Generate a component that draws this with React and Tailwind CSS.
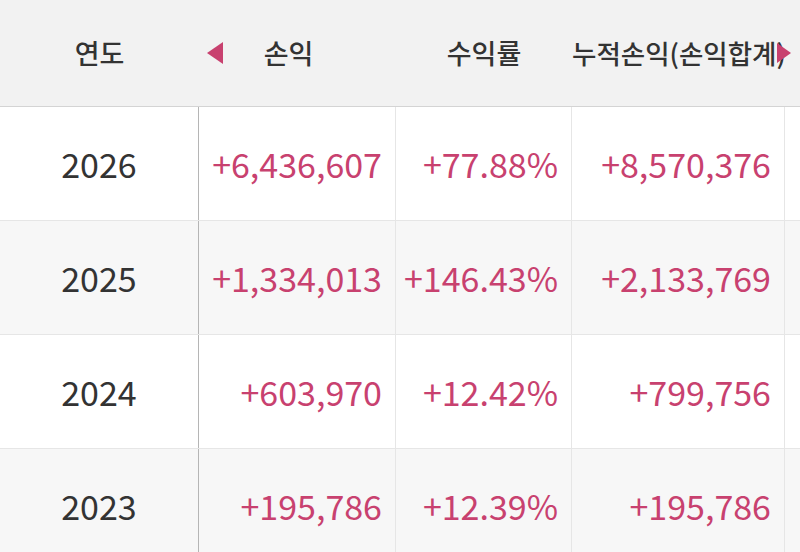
import React from 'react'

const rows = [
  { year: '2026', pnl: '+6,436,607', rate: '+77.88%', total: '+8,570,376' },
  { year: '2025', pnl: '+1,334,013', rate: '+146.43%', total: '+2,133,769' },
  { year: '2024', pnl: '+603,970', rate: '+12.42%', total: '+799,756' },
  { year: '2023', pnl: '+195,786', rate: '+12.39%', total: '+195,786' },
]

const font = { fontFamily: '"Noto Sans CJK KR", "Noto Sans", sans-serif' }

export default function App() {
  return (
    <div className="relative h-[552px] w-[800px] overflow-hidden bg-white" style={font}>
      {/* 헤더 */}
      <div className="grid h-[107px] grid-cols-[199px_197px_176px_213px_1fr] border-b border-[#d4d4d4] bg-[#f2f2f2] text-[27px] font-medium text-[#333]">
        <div className="flex items-center justify-center">연도</div>
        <div className="flex items-center justify-center pr-[18px]">손익</div>
        <div className="flex items-center justify-center">수익률</div>
        <div className="flex items-center overflow-hidden whitespace-nowrap text-[26.5px]">누적손익(손익합계)</div>
        <div />
      </div>

      {/* 좌우 스크롤 화살표 */}
      <svg className="absolute left-[207px] top-[42px]" width="16" height="22" viewBox="0 0 16 22">
        <path d="M16 0 L16 22 L0 11 Z" fill="#c8416f" />
      </svg>
      <svg className="absolute left-[777px] top-[43px]" width="14" height="20" viewBox="0 0 14 20">
        <path d="M0 0 L0 20 L14 10 Z" fill="#c8416f" />
      </svg>

      {rows.map((r, i) => (
        <div
          key={r.year}
          className={`grid h-[114px] grid-cols-[199px_197px_176px_213px_1fr] border-b border-[#e6e6e6] text-[34px] ${
            i % 2 ? 'bg-[#f7f7f7]' : 'bg-white'
          }`}
        >
          <div className="flex items-center justify-center border-r border-[#b5b5b5] text-[#333]">{r.year}</div>
          <div className="flex items-center justify-end border-r border-[#e6e6e6] pr-[13px] text-[#c8416f]">{r.pnl}</div>
          <div className="flex items-center justify-end border-r border-[#e6e6e6] pr-[13px] text-[#c8416f]">{r.rate}</div>
          <div className="flex items-center justify-end border-r border-[#e6e6e6] pr-[13px] text-[#c8416f]">{r.total}</div>
          <div />
        </div>
      ))}
    </div>
  )
}
